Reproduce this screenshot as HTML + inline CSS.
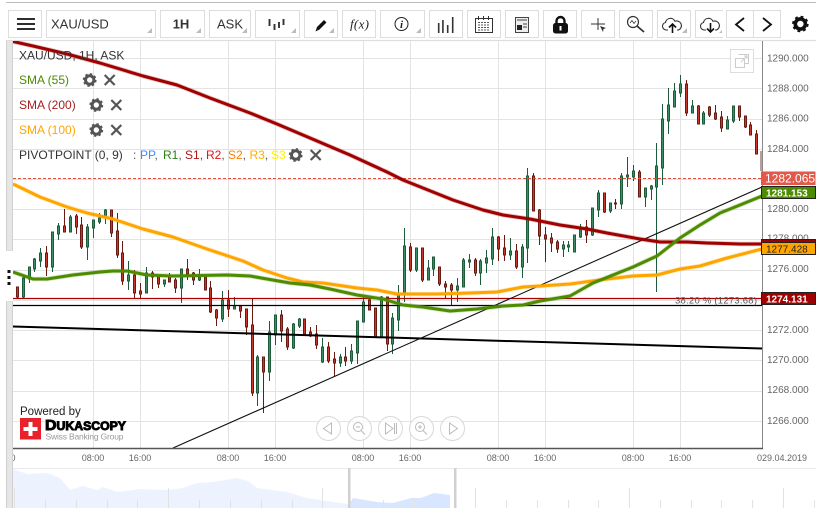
<!DOCTYPE html>
<html><head><meta charset="utf-8"><title>XAU/USD</title>
<style>html,body{margin:0;padding:0;background:#fff}svg{display:block}text{font-family:"Liberation Sans",Arial,sans-serif}</style></head>
<body>
<svg xmlns="http://www.w3.org/2000/svg" width="822" height="516" viewBox="0 0 822 516">
<defs>
<g id="g"><circle r="4.2" fill="none" stroke="currentColor" stroke-width="3"/><circle r="5.9" fill="none" stroke="currentColor" stroke-width="2" stroke-dasharray="2.3 2.33"/></g>
<g id="x"><path d="M-5-5L5 5M5-5L-5 5" stroke="currentColor" stroke-width="2.2" fill="none"/></g>
<clipPath id="c"><rect x="13" y="41" width="749" height="407"/></clipPath>
<clipPath id="t"><rect x="13" y="450" width="10" height="14"/></clipPath>
<path id="s200" fill="none" stroke-linejoin="round" d="M13 41.500L33 46L67 54L100 63L143 76L177 85L210 98L250 113L277 124L310 138L350 155L387 172L403 180L433 192L453 200L483 210L503 215L530 219L560 225L587 229L607 233L640 239L660 242L687 242L707 243L740 244L762 244"/>
<path id="s100" fill="none" stroke-linejoin="round" d="M13 184L40 197L67 207L87 213L113 219L143 229L173 237L207 249L243 261L263 270L287 278L303 282L323 283L357 288L377 290L397 294L437 294L470 293L497 292L523 287L540 286L570 284L607 279L633 276L657 275L680 269L700 266L727 258L762 249"/>
<path id="s55" fill="none" stroke-linejoin="round" d="M13 272L33 279L47 279L73 275L100 272L113 271L127 271L147 275L173 276L227 275L250 276L267 279L290 283L310 285L330 289L357 295L383 299L403 305L423 307L450 311L477 309L503 306L523 305L540 301L570 296L593 283L633 267L657 256L680 238L700 225L720 213L740 205L762 196"/>
</defs>
<rect width="822" height="516" fill="#fff"/>
<path d="M6 2.500H816" stroke="#bbb"/>
<path d="M6 40.500H816" stroke="#ddd" stroke-width="1.200"/>
<!-- toolbar -->
<g fill="#fff" stroke="#ddd">
<rect x="8.500" y="10.500" width="33" height="27"/><rect x="46.500" y="10.500" width="109" height="27"/><rect x="160.500" y="10.500" width="44" height="27"/><rect x="209.500" y="10.500" width="41" height="27"/><rect x="255.500" y="10.500" width="44" height="27"/><rect x="304.500" y="10.500" width="33" height="27"/><rect x="342.500" y="10.500" width="33" height="27"/><rect x="380.500" y="10.500" width="44" height="27"/><rect x="429.500" y="10.500" width="33" height="27"/><rect x="467.500" y="10.500" width="33" height="27"/><rect x="505.500" y="10.500" width="33" height="27"/><rect x="543.500" y="10.500" width="33" height="27"/><rect x="581.500" y="10.500" width="33" height="27"/><rect x="619.500" y="10.500" width="33" height="27"/><rect x="657.500" y="10.500" width="33" height="27"/>
<path d="M723 10.500H695.500V37.500H723" fill="none"/>
<rect x="726.500" y="10.500" width="54" height="27"/><path d="M753.500 10.500V37.500"/>
</g>
<g fill="#bbb"><path d="M152 28v5h-5zM201 28v5h-5zM247 28v5h-5zM296 28v5h-5zM334 28v5h-5zM421 28v5h-5zM687 28v5h-5zM722 30v3h-3z"/></g>
<path d="M17 19H35M17 24H35M17 29H35" stroke="#111" stroke-width="1.800"/>
<text x="51" y="28.500" font-size="13" fill="#333">XAU/USD</text>
<text x="181" y="28.500" font-size="13" font-weight="bold" fill="#333" text-anchor="middle">1H</text>
<text x="230" y="28.500" font-size="13" fill="#333" text-anchor="middle">ASK</text>
<path d="M269.500 19V26M274.500 24V30M279 22V28M283.500 19V25" stroke="#333" stroke-width="1.900"/>
<path d="M315.500 31.500L317 27L324 20L326.500 22.500L319.500 29.500Z" fill="#111"/>
<text x="350" y="28.500" font-size="13" font-style="italic" fill="#222" style="font-family:'Liberation Serif',serif" textLength="19">f(x)</text>
<circle cx="401.500" cy="24" r="6.500" fill="none" stroke="#222"/>
<text x="401.500" y="28" font-size="11" font-weight="bold" font-style="italic" fill="#222" text-anchor="middle" style="font-family:'Liberation Serif',serif">i</text>
<path d="M438.700 23V33M442.900 20V33M447.700 25V33M452.700 17V33" stroke="#333" stroke-width="1.600"/>
<g fill="none" stroke="#333"><rect x="475.500" y="18.500" width="17" height="14"/><path d="M478.500 16V20M483.500 16V20M488.500 16V20" /></g>
<path d="M478 22.500H490M478 25H490M478 27.500H490M478 30H490" stroke="#555" stroke-dasharray="2 1"/>
<rect x="515.500" y="17.500" width="13" height="15" fill="#eee" stroke="#444"/>
<path d="M517 20H527M523 24H527M523 27H527" stroke="#444"/><rect x="517" y="25" width="5" height="5" fill="#222"/>
<path d="M556.500 24V21a4 4 0 0 1 8 0V24" fill="none" stroke="#111" stroke-width="2.400"/>
<rect x="553" y="23" width="15" height="10.500" rx="2.500" fill="#111"/><rect x="559.500" y="26" width="2" height="4.500" fill="#fff"/>
<path d="M591 24H605M598 18V30" stroke="#333"/><path d="M600 26L606 28L603.500 29L603 32Z" fill="#333"/>
<circle cx="633" cy="22" r="5.500" fill="none" stroke="#333" stroke-width="1.200"/><path d="M637 26L644 32" stroke="#333" stroke-width="1.800"/><path d="M630 23L632 20.500L634 23.500L636 21" fill="none" stroke="#333" stroke-width=".8"/>
<path d="M668 30H666a3.800 3.800 0 0 1 -.5-7.500a5 5 0 0 1 9.500-1.200a4 4 0 0 1 3.500 8.700H677" fill="none" stroke="#333" stroke-width="1.100"/>
<path d="M672.500 33V25M669 27.500L672.500 24L676 27.500" fill="none" stroke="#111" stroke-width="1.600"/>
<path d="M706 30H704a3.800 3.800 0 0 1 -.5-7.500a5 5 0 0 1 9.500-1.200a4 4 0 0 1 3.500 8.700H715" fill="none" stroke="#333" stroke-width="1.100"/>
<path d="M710.500 23V31M707 28.500L710.500 32L714 28.500" fill="none" stroke="#111" stroke-width="1.600"/>
<path d="M744 18L736 24.500L744 31M763 18L771 24.500L763 31" fill="none" stroke="#111" stroke-width="1.800"/>
<use href="#g" x="800.300" y="24" color="#111" transform="translate(-160 -4.800) scale(1.200 1.200)" />
<!-- left gutter -->
<rect x="6.500" y="41" width="6" height="467" fill="#e6e6e6"/><path d="M6.500 41V508M12.500 41V508" stroke="#d0d0d0"/>
<rect x="6" y="250" width="7" height="51.500" fill="#fff"/><path d="M6 250.500H13M6 301.500H13" stroke="#ddd"/>
<rect x="7.500" y="270" width="3" height="3" fill="#111"/><rect x="7.500" y="276" width="3" height="3" fill="#111"/><rect x="7.500" y="282" width="3" height="3" fill="#111"/>
<!-- grid -->
<path d="M13 58.500H762M13 88.500H762M13 119.500H762M13 149.500H762M13 179.500H762M13 209.500H762M13 239.500H762M13 270.500H762M13 300.500H762M13 330.500H762M13 360.500H762M13 391.500H762M13 421.500H762M93.500 41V448M140.500 41V448M228.500 41V448M275.500 41V448M363.500 41V448M410.500 41V448M498.500 41V448M545.500 41V448M633.500 41V448M680.500 41V448" stroke="#e3e3e3" fill="none"/>
<g clip-path="url(#c)">
<!-- green wicks -->
<path stroke="#1d5c3a" fill="none" d="M23.500 277V298M29.500 267V283M34.500 258V272M40.500 248V267M52.500 232V272M58.500 223V240M70.500 215V232M87.500 224V260M93.500 220V238M99.500 213V224M105.500 209V224M128.500 261V290M146.500 267V293M164.500 280V287M181.500 269V303M199.500 269V281M222.500 291V322M234.500 297V309M257.500 355V406M269.500 321V381M275.500 315V345M293.500 323V349M299.500 318V328M322.500 338V363M340.500 354V367M351.500 344V364M357.500 321V364M363.500 297V322M381.500 296V337M392.500 313V354M398.500 285V331M404.500 228V302M416.500 248V272M428.500 260V280M433.500 257V276M457.500 278V302M463.500 258V287M469.500 254V268M480.500 259V285M486.500 250V273M492.500 228V265M510.500 238V260M522.500 244V278M527.500 168V263M563.500 241V257M568.500 241V252M574.500 235V252M580.500 224V238M592.500 208V236M598.500 190V217M610.500 203V213M621.500 173V209M627.500 157V187M633.500 165V181M645.500 188V207M651.500 185V200M656.500 143V292M662.500 104V185M668.500 88V134M674.500 83V107M680.500 75V97M692.500 100V113M703.500 111V124M727.500 116V129M733.500 106V123"/>
<!-- red wicks -->
<path stroke="#6b1a12" fill="none" d="M17.500 287V298M46.500 246V276M64.500 209V232M76.500 214V234M81.500 217V249M111.500 210V237M117.500 213V258M122.500 241V285M134.500 270V298M140.500 283V298M152.500 271V289M158.500 275V288M169.500 273V282M175.500 278V293M187.500 259V280M193.500 272V285M205.500 277V290M210.500 281V313M216.500 309V326M228.500 290V317M240.500 305V318M246.500 309V335M252.500 298V396M263.500 357V413M281.500 310V342M287.500 327V350M304.500 319V334M310.500 327V337M316.500 325V349M328.500 342V363M334.500 352V377M345.500 347V366M369.500 298V310M375.500 308V337M387.500 297V351M410.500 243V272M422.500 248V282M439.500 267V286M445.500 281V298M451.500 283V305M475.500 258V276M498.500 236V261M504.500 235V261M516.500 244V269M533.500 173V211M539.500 209V245M545.500 227V262M551.500 233V252M557.500 240V253M586.500 220V243M604.500 193V213M615.500 199V209M639.500 170V197M686.500 80V116M698.500 105V124M709.500 106V117M715.500 105V120M721.500 111V132M739.500 106V121M745.500 116V128M750.500 122V135M756.500 130V154"/>
<!-- green bodies -->
<path stroke="#1d5c3a" fill="#3c8d66" d="M22.500 278h2v19h-2zM28.500 267h2v12h-2zM33.500 259h2v10h-2zM39.500 253h2v8h-2zM51.500 232h2v35h-2zM57.500 226h2v8h-2zM69.500 217h2v15h-2zM86.500 227h2v20h-2zM92.500 220h2v8h-2zM98.500 218h2v4h-2zM104.500 210h2v7h-2zM127.500 275h2v6h-2zM145.500 273h2v20h-2zM163.500 280h2v4h-2zM180.500 269h2v19h-2zM198.500 277h2v3h-2zM221.500 300h2v19h-2zM233.500 306h2v3h-2zM256.500 357h2v36h-2zM268.500 332h2v40h-2zM274.500 315h2v20h-2zM292.500 324h2v24h-2zM298.500 319h2v7h-2zM321.500 347h2v15h-2zM339.500 357h2v6h-2zM350.500 351h2v10h-2zM356.500 321h2v32h-2zM362.500 302h2v20h-2zM380.500 297h2v40h-2zM391.500 318h2v26h-2zM397.500 295h2v25h-2zM403.500 246h2v47h-2zM415.500 248h2v22h-2zM427.500 268h2v12h-2zM432.500 257h2v12h-2zM456.500 286h2v4h-2zM462.500 260h2v27h-2zM468.500 260h2v2h-2zM479.500 261h2v12h-2zM485.500 258h2v5h-2zM491.500 237h2v22h-2zM509.500 251h2v4h-2zM521.500 247h2v20h-2zM526.500 176h2v72h-2zM562.500 245h2v4h-2zM567.500 245h2v2h-2zM573.500 235h2v17h-2zM579.500 227h2v10h-2zM591.500 208h2v27h-2zM597.500 193h2v17h-2zM609.500 203h2v8h-2zM620.500 176h2v28h-2zM626.500 175h2v2h-2zM632.500 171h2v6h-2zM644.500 188h2v9h-2zM650.500 186h2v3h-2zM655.500 166h2v21h-2zM661.500 119h2v49h-2zM667.500 105h2v16h-2zM673.500 91h2v16h-2zM679.500 84h2v9h-2zM691.500 106h2v7h-2zM702.500 113h2v11h-2zM726.500 120h2v9h-2zM732.500 106h2v15h-2z"/>
<!-- red bodies -->
<path stroke="#6b1a12" fill="#c5382a" d="M16.500 287h2v10h-2zM45.500 253h2v14h-2zM63.500 226h2v6h-2zM75.500 216h2v11h-2zM80.500 225h2v22h-2zM110.500 210h2v23h-2zM116.500 231h2v24h-2zM121.500 253h2v28h-2zM133.500 275h2v18h-2zM139.500 291h2v3h-2zM151.500 273h2v4h-2zM157.500 276h2v8h-2zM168.500 277h2v5h-2zM174.500 280h2v8h-2zM186.500 269h2v5h-2zM192.500 273h2v7h-2zM204.500 277h2v13h-2zM209.500 288h2v24h-2zM215.500 310h2v8h-2zM227.500 300h2v9h-2zM239.500 306h2v5h-2zM245.500 309h2v18h-2zM251.500 325h2v68h-2zM262.500 357h2v15h-2zM280.500 315h2v16h-2zM286.500 329h2v18h-2zM303.500 319h2v15h-2zM309.500 332h2v4h-2zM315.500 334h2v11h-2zM327.500 347h2v14h-2zM333.500 359h2v4h-2zM344.500 357h2v4h-2zM368.500 300h2v10h-2zM374.500 308h2v29h-2zM386.500 297h2v47h-2zM409.500 247h2v23h-2zM421.500 248h2v32h-2zM438.500 267h2v17h-2zM444.500 284h2v3h-2zM450.500 285h2v5h-2zM474.500 260h2v13h-2zM497.500 237h2v12h-2zM503.500 248h2v7h-2zM515.500 251h2v16h-2zM532.500 176h2v35h-2zM538.500 210h2v26h-2zM544.500 235h2v4h-2zM550.500 238h2v5h-2zM556.500 242h2v7h-2zM585.500 227h2v8h-2zM603.500 193h2v19h-2zM614.500 203h2v1h-2zM638.500 172h2v25h-2zM685.500 84h2v29h-2zM697.500 106h2v18h-2zM708.500 107h2v8h-2zM714.500 113h2v6h-2zM720.500 117h2v11h-2zM738.500 106h2v11h-2zM744.500 116h2v11h-2zM749.500 125h2v10h-2zM755.500 134h2v20h-2z"/>
<!-- levels -->
<path d="M13 178.500H762" stroke="#e0503f" stroke-dasharray="3 2"/>
<path d="M13 305.500H762" stroke="#000" stroke-width="1.300"/>
<path d="M13 298.500H762" stroke="#a80000" stroke-width="1.200"/>
<path d="M13 326.500L762 348.500" stroke="#000" stroke-width="2"/>
<path d="M173 448L762 187" stroke="#111" stroke-width="1.100"/>
<!-- SMAs -->
<use href="#s200" stroke="#a00000" stroke-width="4.600" stroke-opacity=".25"/><use href="#s200" stroke="#a00000" stroke-width="3"/>
<use href="#s100" stroke="#ffa500" stroke-width="4.600" stroke-opacity=".25"/><use href="#s100" stroke="#ffa500" stroke-width="3"/>
<use href="#s55" stroke="#4d8c00" stroke-width="4.600" stroke-opacity=".25"/><use href="#s55" stroke="#4d8c00" stroke-width="3"/>
</g>
<path d="M762.500 41V449" stroke="#888"/>
<path d="M13 448.500H763" stroke="#555" stroke-width="1.500"/>
<rect x="760" y="151" width="2" height="20" fill="#b8a09e"/>
<!-- legend -->
<g font-size="12">
<text x="19" y="59.500" fill="#333">XAU/USD, 1H, ASK</text>
<text x="19" y="84" fill="#4d8c00">SMA (55)</text>
<text x="19" y="109" fill="#a52020">SMA (200)</text>
<text x="19" y="134" fill="#ffa500">SMA (100)</text>
<text x="19" y="159" fill="#333">PIVOTPOINT (0, 9)</text>
<text x="133" y="159" fill="#555">:</text>
<text x="140" y="159" fill="#3b8bff">PP<tspan fill="#555">,</tspan></text>
<text x="163" y="159" fill="#2e7d12">R1<tspan fill="#555">,</tspan></text>
<text x="185" y="159" fill="#b01515">S1<tspan fill="#555">,</tspan></text>
<text x="206" y="159" fill="#f01010">R2<tspan fill="#555">,</tspan></text>
<text x="228" y="159" fill="#ff8000">S2<tspan fill="#555">,</tspan></text>
<text x="249.500" y="159" fill="#ffb000">R3<tspan fill="#555">,</tspan></text>
<text x="271" y="159" fill="#ffee00">S3</text>
</g>
<g color="#555">
<use href="#g" x="89.700" y="80"/><use href="#x" x="109.700" y="80"/>
<use href="#g" x="96.300" y="105"/><use href="#x" x="116.300" y="105"/>
<use href="#g" x="96.300" y="130"/><use href="#x" x="116.300" y="130"/>
<use href="#g" x="295.700" y="155"/><use href="#x" x="315.700" y="155"/>
</g>
<!-- popout -->
<rect x="730.500" y="49.500" width="23" height="23" fill="#fff" stroke="#ddd"/>
<path d="M738.500 54.500H748.500V63.500H745M735.500 58.500H744.500V67.500H735.500ZM741 62L747 56M744 56H747V59" fill="none" stroke="#ccc"/>
<!-- axis labels -->
<g font-size="10" fill="#666">
<text x="767" y="61.500">1290.000</text><text x="767" y="91.500">1288.000</text><text x="767" y="121.500">1286.000</text><text x="767" y="152">1284.000</text><text x="767" y="212">1280.000</text><text x="767" y="241.500">1278.000</text><text x="767" y="272">1276.000</text><text x="767" y="333">1272.000</text><text x="767" y="363">1270.000</text><text x="767" y="393">1268.000</text><text x="767" y="424">1266.000</text>
</g>
<rect x="761" y="171.500" width="54.500" height="13.500" fill="#e0594a"/>
<text x="765" y="182.500" font-size="12" fill="#fff">1282.065</text>
<rect x="761.500" y="186.500" width="54" height="12" fill="#4d8c00" stroke="#222"/>
<text x="766" y="196.500" font-size="10" font-weight="bold" fill="#fff">1281.153</text>
<rect x="761.500" y="239.500" width="54" height="12" fill="#a00000" stroke="#222"/>
<rect x="761.500" y="242.500" width="54" height="12" fill="#ffa500" stroke="#222"/>
<text x="766" y="252.500" font-size="10" fill="#222">1277.428</text>
<rect x="761.500" y="292.500" width="54" height="12" fill="#a00000" stroke="#222"/>
<text x="766" y="302.500" font-size="10" font-weight="bold" fill="#fff">1274.131</text>
<text x="675" y="303.500" font-size="9.500" fill="#555" textLength="82">38.20 % (1273.68)</text>
<!-- time labels -->
<g font-size="9" fill="#666" text-anchor="middle">
<text x="93" y="461">08:00</text><text x="140" y="461">16:00</text><text x="228" y="461">08:00</text><text x="275" y="461">16:00</text><text x="363" y="461">08:00</text><text x="410" y="461">16:00</text><text x="498" y="461">08:00</text><text x="545" y="461">16:00</text><text x="633" y="461">08:00</text><text x="680" y="461">16:00</text><text x="782" y="461">029.04.2019</text>
</g>
<text x="10.500" y="461" font-size="9" fill="#666" clip-path="url(#t)">0</text>
<!-- logo -->
<text x="20" y="415" font-size="11.500" fill="#222">Powered by</text>
<rect x="20" y="418" width="21" height="21.500" fill="#e8212c"/>
<path d="M28.500 422h4v5h5v4h-5v5h-4v-5h-5v-4h5z" fill="#fff"/>
<text x="45" y="430" font-size="11.500" font-weight="bold" fill="#000" stroke="#000" stroke-width=".9" textLength="81" lengthAdjust="spacingAndGlyphs"><tspan font-size="15">D</tspan>UKASCOPY</text>
<text x="45.500" y="439.500" font-size="8.500" fill="#999" textLength="78">Swiss Banking Group</text>
<!-- nav -->
<g fill="#fff" fill-opacity=".7" stroke="#d8d8d8">
<circle cx="328.500" cy="428.500" r="12"/><circle cx="359.500" cy="428.500" r="12"/><circle cx="390.500" cy="428.500" r="12"/><circle cx="421.500" cy="428.500" r="12"/><circle cx="452.500" cy="428.500" r="12"/>
</g>
<g fill="none" stroke="#bbb">
<path d="M331.500 423L323.500 428.500L331.500 434Z"/>
<circle cx="358" cy="427" r="4.500"/><path d="M361 430.500L365 434.500M356 427H360" />
<path d="M385.500 423L393 428.500L385.500 434ZM394.500 423V434M396.500 423V434"/>
<circle cx="420" cy="427" r="4.500"/><path d="M423 430.500L427 434.500M418 427H422M420 425V429"/>
<path d="M449.500 423L457.500 428.500L449.500 434Z"/>
</g>
<!-- overview -->
<path d="M13 468.500H816" stroke="#eaeaea"/>
<path d="M13 469L27 474L47 473L60 478L70 490L83 486L97 490L103 487L117 492L140 489L167 490L183 488L197 483L213 482L237 478L248 481L257 488L287 492L307 498L333 502L349 504V508H13Z" fill="#edf3fe"/>
<path d="M349 504L353 498L377 502L393 503L411 498L421 498L434 493L450 495V508H349Z" fill="#d8e7ff"/>
<path d="M14.500 488V508M45.500 500V508M76.500 500V508M107.500 500V508M137.500 500V508M168.500 488V508M199.500 500V508M230.500 500V508M261.500 500V508M292.500 500V508M322.500 488V508M353.500 500V508M383.500 500V508M414.500 500V508M445.500 500V508M475.500 488V508M506.500 500V508M537.500 500V508M568.500 500V508M598.500 500V508M629.500 488V508M660.500 500V508M691.500 500V508M721.500 500V508M752.500 500V508M783.500 488V508M814.500 500V508" stroke="#e2e2e2"/>
<rect x="348" y="468" width="2.500" height="40" fill="#d0d0d0"/>
<rect x="454" y="468" width="2.500" height="40" fill="#d0d0d0"/>
</svg>
</body></html>
